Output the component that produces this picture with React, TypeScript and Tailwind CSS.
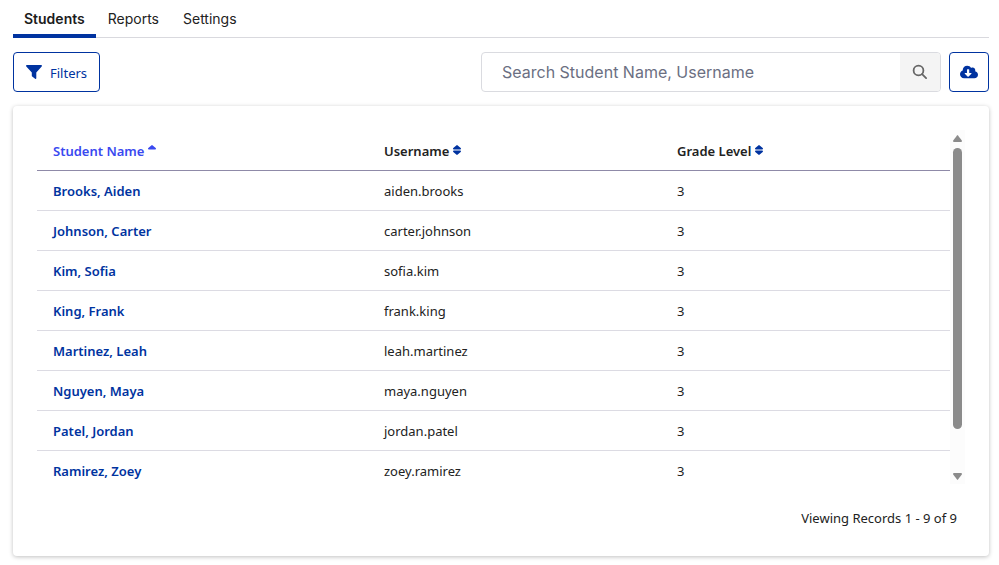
import { FC } from 'react';
import { FaCloudDownloadAlt } from 'react-icons/fa';

type SortState = 'asc' | 'none';

interface Student {
  name: string;
  username: string;
  grade: number;
}

const tabs = ['Students', 'Reports', 'Settings'];

const columns: Array<{ label: string; sort: SortState; width: string }> = [
  { label: 'Student Name', sort: 'asc', width: 'w-[331px]' },
  { label: 'Username', sort: 'none', width: 'w-[293px]' },
  { label: 'Grade Level', sort: 'none', width: 'w-auto' },
];

const students: Student[] = [
  { name: 'Brooks, Aiden', username: 'aiden.brooks', grade: 3 },
  { name: 'Johnson, Carter', username: 'carter.johnson', grade: 3 },
  { name: 'Kim, Sofia', username: 'sofia.kim', grade: 3 },
  { name: 'King, Frank', username: 'frank.king', grade: 3 },
  { name: 'Martinez, Leah', username: 'leah.martinez', grade: 3 },
  { name: 'Nguyen, Maya', username: 'maya.nguyen', grade: 3 },
  { name: 'Patel, Jordan', username: 'jordan.patel', grade: 3 },
  { name: 'Ramirez, Zoey', username: 'zoey.ramirez', grade: 3 },
];

const SortIcon: FC<{ sort: SortState }> = ({ sort }) => (
  <svg viewBox="0 0 8 10" className="w-2 h-2.5" fill="currentColor" aria-hidden="true">
    <path d="M3.3.4a1 1 0 0 1 1.4 0L7.7 3.1c.6.6.2 1.3-.5 1.3H.8C.1 4.4-.3 3.7.3 3.1z" />
    {sort === 'none' && (
      <path d="M3.3 9.6a1 1 0 0 0 1.4 0L7.7 6.9c.6-.6.2-1.3-.5-1.3H.8C.1 5.6-.3 6.3.3 6.9z" />
    )}
  </svg>
);

const FilterIcon: FC = () => (
  <svg viewBox="0 0 16 14" className="w-4 h-3.5" fill="currentColor" aria-hidden="true">
    <path d="M.9 0h14.2c.8 0 1.2.9.6 1.5L10.3 7.6v5.6c0 .7-.7 1-1.2.6L6.2 11.6a1 1 0 0 1-.4-.8V7.6L.3 1.5C-.3.9.1 0 .9 0z" />
  </svg>
);

const SearchIcon: FC = () => (
  <svg viewBox="0 0 16 16" className="w-4 h-4" fill="none" stroke="currentColor" strokeWidth="1.8" aria-hidden="true">
    <circle cx="6.5" cy="6.5" r="4.9" />
    <path d="M10.1 10.1l4 4" strokeLinecap="round" />
  </svg>
);

const TabBar: FC = () => (
  <nav className="flex border-b border-[#d9d9de] text-sm leading-5 font-[Inter,sans-serif]">
    {tabs.map((tab, i) => (
      <a
        key={tab}
        href="#"
        aria-current={i === 0 ? 'page' : undefined}
        className={`-mb-px pt-[9px] h-[38px] border-b-4 ${
          i === 0
            ? 'px-[11px] border-[#0033a0] font-semibold text-[#1c1c1c]'
            : 'px-3 border-transparent text-[#222222]'
        }`}
      >
        {tab}
      </a>
    ))}
  </nav>
);

const Toolbar: FC = () => (
  <div className="mt-3.5 flex items-center justify-between">
    <button className="flex h-10 items-center gap-2 rounded border border-[#0033a0] bg-white px-3 text-[#0033a0]">
      <FilterIcon />
      <span className="pt-0.5">Filters</span>
    </button>
    <div className="flex gap-2">
      <div className="flex h-10 w-[460px] overflow-hidden rounded border border-[#dadbe0] font-[Inter,sans-serif]">
        <input
          type="text"
          aria-label="Search"
          placeholder="Search Student Name, Username"
          className="min-w-0 flex-1 px-5 text-base text-[#222222] placeholder:text-[#6b6f82] outline-none"
        />
        <button aria-label="Search" className="flex w-10 items-center justify-center bg-[#f4f4f4] text-[#666666]">
          <SearchIcon />
        </button>
      </div>
      <button
        aria-label="Download"
        className="flex h-10 w-10 items-center justify-center rounded border border-[#0033a0] bg-white text-[#0033a0]"
      >
        <FaCloudDownloadAlt className="w-[18px] h-4" />
      </button>
    </div>
  </div>
);

const StudentTable: FC = () => (
  <table className="w-full table-fixed border-separate border-spacing-0 text-left">
    <thead>
      <tr>
        {columns.map(({ label, sort, width }) => (
          <th
            key={label}
            aria-sort={sort === 'asc' ? 'ascending' : undefined}
            className={`h-[41px] border-b border-[#8f8aa8] px-4 pt-0.5 pb-0 font-semibold ${width}`}
          >
            <button className={`flex items-center gap-1 ${sort === 'asc' ? 'text-[#3a49f0]' : 'text-[#222222]'}`}>
              {label}
              <span className={`pb-0.5 ${sort === 'asc' ? 'text-[#3a49f0]' : 'text-[#0033a0]'}`}>
                <SortIcon sort={sort} />
              </span>
            </button>
          </th>
        ))}
      </tr>
    </thead>
    <tbody>
      {students.map((student) => (
        <tr key={student.username}>
          <td className="h-10 border-b border-[#dcdbe3] px-4 py-0">
            <a href="#" className="font-semibold text-[#0033a0]">
              {student.name}
            </a>
          </td>
          <td className="h-10 border-b border-[#dcdbe3] px-4 py-0">{student.username}</td>
          <td className="h-10 border-b border-[#dcdbe3] px-4 py-0">{student.grade}</td>
        </tr>
      ))}
    </tbody>
  </table>
);

const ScrollTrack: FC = () => (
  <div className="flex w-[15px] flex-col items-center bg-[#fcfcfc] pt-[5px] pb-1 text-[#8b8b8b]" aria-hidden="true">
    <svg viewBox="0 0 9 7" className="w-[9px] h-[7px]" fill="currentColor">
      <path d="M4 .4q.5-.6 1 0L8.8 5.6Q9.3 7 8 7H1Q-.3 7 .2 5.6z" />
    </svg>
    <div className="mt-1.5 h-[281px] w-[9px] rounded-full bg-[#8b8b8b]" />
    <svg viewBox="0 0 9 7" className="mt-auto w-[9px] h-[7px]" fill="currentColor">
      <path d="M4 6.6q.5.6 1 0L8.8 1.4Q9.3 0 8 0H1Q-.3 0 .2 1.4z" />
    </svg>
  </div>
);

const App: FC = () => {
  return (
    <div className="min-h-screen bg-white pl-[13px] pr-2.5 text-[13px] leading-5 text-[#222222] font-['Noto_Sans',sans-serif]">
      <TabBar />
      <Toolbar />
      <main className="mt-3.5 rounded bg-white p-6 shadow-[0_1px_4px_rgba(0,0,0,0.25)]">
        <div className="flex max-h-[354px] overflow-hidden">
          <div className="min-w-0 flex-1">
            <StudentTable />
          </div>
          <ScrollTrack />
        </div>
        <p className="mt-6 mb-1 pr-2 text-right">Viewing Records 1 - 9 of 9</p>
      </main>
    </div>
  );
};

export default App;
